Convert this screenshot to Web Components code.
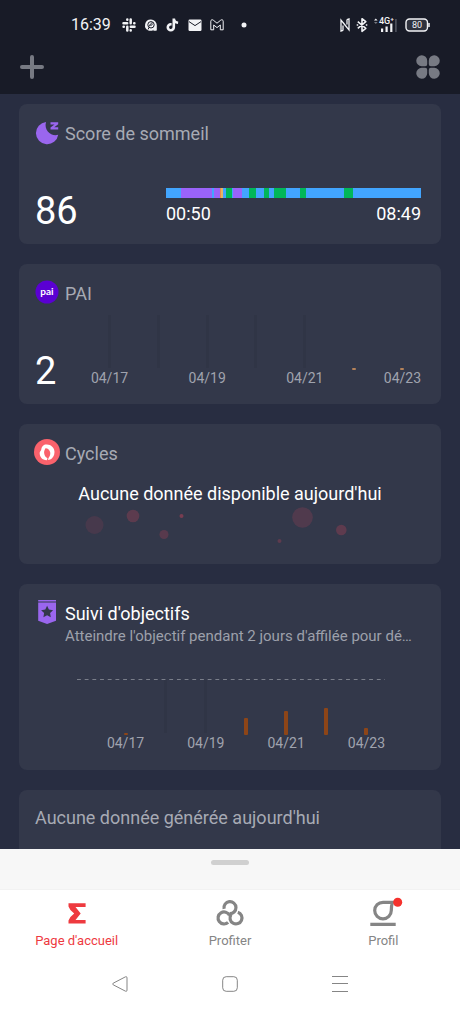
<!DOCTYPE html>
<html lang="fr">
<head>
<meta charset="utf-8">
<meta name="viewport" content="width=device-width, initial-scale=1">
<title>Page d'accueil</title>
<style>
  html, body { height: 100%; }
  body { margin: 0; font-family: Roboto, "Liberation Sans", sans-serif; background: #fff; }
</style>
</head>
<body>
<health-app></health-app>

<template id="status-bar">
  <style>
    :host { display: flex; justify-content: space-between; align-items: center; height: 50px; padding: 0 30px 0 71px; color: #f2f3f6; }
    div { display: flex; align-items: center; gap: 8px; }
    .right { gap: 7px; }
    time { font: 16px/20px Roboto, sans-serif; min-width: 43px; }
    svg { display: block; overflow: visible; }
    .dot { margin-left: 9px; }
    text { font-family: Roboto, sans-serif; fill: currentColor; }
  </style>
  <div>
    <time>16:39</time>
    <svg width="14" height="14" viewBox="0 0 14 14" fill="none" stroke="currentColor" stroke-width="2.500" stroke-linecap="round"><path d="M1.500 5.300h3.700M8.700 1.500v3.700M8.800 8.700h3.700M5.300 8.800v3.700M5.300 1.600v.2M12.200 5.300h.2M8.700 12.200v.2M1.600 8.700h.2"/></svg>
    <svg width="14" height="14" viewBox="0 0 14 14"><path d="M7 1.500a5.800 5.800 0 0 1 5.800 5.800V12a.8.8 0 0 1-.8.8H9.500l-.4-1.300-.6 1.300H5A5.800 5.800 0 0 1 7 1.500z" fill="currentColor"/><g fill="none" stroke="#181b27"><circle cx="7" cy="6.800" r="3.200"/><path d="M5.500 8.300c.3-2 1.500-3.200 3.300-3.500M6.500 7.500l2-1M4 11.500l1-2"/></g></svg>
    <svg width="14" height="14" viewBox="0 0 14 14" fill="none" stroke="currentColor" stroke-width="2.600"><path d="M7.800.5v8.700a3 3 0 1 1-3-3h.8M7.800.6c.3 2.600 2 4 4.300 4.200"/></svg>
    <svg width="14" height="14" viewBox="0 0 14 14"><rect x="0.500" y="1.500" width="13" height="11.500" rx="1.200" fill="currentColor"/><path d="M1 3.600l6 4 6-4" fill="none" stroke="#181b27"/></svg>
    <svg width="14" height="14" viewBox="0 0 14 14"><path d="M.8 11.800V3.200c0-1.400 1.500-1.900 2.500-1L7 5.200l3.700-3c1-.9 2.500-.4 2.500 1v8.600h-2.900V7L7 9.600 3.700 7v4.800z" fill="none" stroke="currentColor" stroke-linejoin="round"/></svg>
    <svg class="dot" width="6" height="6" viewBox="0 0 6 6"><circle cx="3" cy="3" r="2.500" fill="currentColor"/></svg>
  </div>
  <div class="right">
    <svg width="10" height="14" viewBox="0 0 10 14" fill="none" stroke="currentColor" stroke-width="1.300"><path d="M3 12.300L1 13V2l6 7.500M3 4.500L9 12V1L7 1.700M7 1.500v5M3 7.500v5"/></svg>
    <svg width="10" height="14" viewBox="0 0 10 14" fill="none" stroke="currentColor" stroke-width="1.600" stroke-linejoin="round"><path d="M.8 3.700l8 6.600L5 13.300V.7l3.800 3-8 6.600"/><path d="M-.3 7h1.500M8.800 7h1.500"/></svg>
    <svg width="24" height="14" viewBox="0 0 24 14"><text x="5" y="6" font-size="9" font-weight="500">4G⁺</text><path d="M0 2.500L1.800.5l1.800 2z" fill="currentColor"/><path d="M0 4l1.800 2 1.800-2z" fill="#777a83"/><path d="M7 10.500h2.200V14H7zM11.500 8.500h2.200V14h-2.200zM16.200 5.500h2.200V14h-2.200z" fill="currentColor"/><path d="M21 1h1.800v13H21z" fill="#4a4d58"/></svg>
    <svg width="25" height="14" viewBox="0 0 25 14"><rect x="1" y="1" width="21.500" height="12" rx="3.500" fill="#2f323d" stroke="currentColor" stroke-width="1.400"/><path d="M24 5v4" stroke="currentColor" stroke-width="1.500"/><text x="12" y="10" font-size="9" text-anchor="middle">80</text></svg>
  </div>
</template>

<template id="app-header">
  <style>
    :host { display: flex; justify-content: space-between; align-items: center; height: 44px; padding: 0 16px; box-sizing: border-box; }
    button { border: 0; padding: 4px; background: none; color: #777a83; height: 32px; margin-bottom: 10px; }
    svg { display: block; }
  </style>
  <button aria-label="Ajouter"><svg width="24" height="24" viewBox="0 0 24 24"><path d="M12 2v20M2 12h20" stroke="currentColor" stroke-width="4" stroke-linecap="round"/></svg></button>
  <button aria-label="Applications"><svg width="24" height="24" viewBox="0 0 24 24" fill="currentColor"><path d="M5.700.3A5.400 5.400 0 0 1 11.200 5.700V9.200a2 2 0 0 1-2 2H5.700A5.400 5.400 0 0 1 5.700.3z"/><path transform="translate(24 0) scale(-1 1)" d="M5.700.3A5.400 5.400 0 0 1 11.200 5.700V9.200a2 2 0 0 1-2 2H5.700A5.400 5.400 0 0 1 5.700.3z"/><path transform="translate(0 24) scale(1 -1)" d="M5.700.3A5.400 5.400 0 0 1 11.200 5.700V9.200a2 2 0 0 1-2 2H5.700A5.400 5.400 0 0 1 5.700.3z"/><path transform="translate(24 24) scale(-1 -1)" d="M5.700.3A5.400 5.400 0 0 1 11.200 5.700V9.200a2 2 0 0 1-2 2H5.700A5.400 5.400 0 0 1 5.700.3z"/></svg></button>
</template>

<template id="feed-card">
  <style>
    :host { display: flex; flex-direction: column; flex: none; box-sizing: border-box; min-height: 140px; padding: 18px 16px 13px; border-radius: 8px; background: #33384a; color: #fff; }
    header { display: flex; gap: 6px; }
    ::slotted(svg) { display: block; flex: none; overflow: visible; }
    h2 { margin: 0; font-weight: 400; font-size: 18px; line-height: 24px; color: var(--title, #a7aab4); white-space: nowrap; }
    .body { flex: 1; display: flex; flex-direction: column; justify-content: var(--body-align, flex-end); }
  </style>
  <header><slot name="icon"></slot><h2><slot name="title"></slot></h2></header>
  <div class="body"><slot></slot></div>
</template>

<template id="metric-row">
  <style>
    :host { display: grid; grid-template-columns: var(--value-width, 56px) 1fr; align-items: end; padding-right: 4px; }
    .value { font-size: 38px; line-height: 40px; }
    .chart { padding-bottom: 5px; }
  </style>
  <div class="value"><slot name="value"></slot></div>
  <div class="chart"><slot></slot></div>
</template>

<template id="sleep-timeline">
  <style>
    :host { display: block; }
    .bar { display: flex; height: 10px; margin-bottom: 4px; }
    .hours { display: flex; justify-content: space-between; font-size: 18px; line-height: 24px; }
  </style>
  <div class="bar"></div>
  <div class="hours"><slot name="start"></slot><slot name="end"></slot></div>
</template>

<template id="day-bars">
  <style>
    :host { display: flex; justify-content: space-between; }
    .day { width: 37px; display: flex; flex-direction: column; align-items: center; }
    .plot { height: 55px; display: flex; align-items: flex-end; }
    .fill { width: 4px; border-radius: 1px; background: var(--bar, #8d4518); }
    .empty { width: 3px; height: 53px; margin-bottom: 2px; background: #303546; }
    .label { height: 16px; line-height: 16px; font-size: 14px; color: #a0a3ae; }
  </style>
</template>

<template id="goal-chart">
  <style>
    :host { display: block; }
    p { margin: 0 0 33px 30px; font-size: 15px; line-height: 20px; color: #9da0ab; white-space: nowrap; }
    .target { height: 1px; margin: 0 40px 0 42px; background: linear-gradient(to right, #7a7e8a 55%, transparent 55%) 0 0 / calc(100% / 40) 1px; }
    .days { padding: 0 40px 0 72px; }
  </style>
  <p><slot name="hint"></slot></p>
  <div class="target"></div>
  <div class="days"><slot></slot></div>
</template>

<template id="empty-cycle">
  <style>
    :host { display: block; text-align: center; font-size: 18px; line-height: 24px; padding-top: 16px; }
    svg { display: block; margin: 0 auto; }
  </style>
  <slot></slot>
  <svg width="300" height="40" viewBox="80 506 300 40" fill="#e0455c" aria-hidden="true"><circle cx="94.500" cy="525" r="9" opacity=".12"/><circle cx="133" cy="516" r="6.300" opacity=".24"/><circle cx="164" cy="534.500" r="4.500" opacity=".22"/><circle cx="181.500" cy="516" r="2" opacity=".4"/><circle cx="302.500" cy="517.500" r="10.300" opacity=".17"/><circle cx="341.300" cy="530" r="5.300" opacity=".25"/><circle cx="279.500" cy="541" r="2" opacity=".25"/></svg>
</template>

<template id="pull-sheet">
  <style>
    :host { display: flex; justify-content: center; align-items: flex-start; flex: none; height: 40px; padding-top: 11px; box-sizing: border-box; background: #f7f7f7; }
    i { width: 38px; height: 5px; border-radius: 3px; background: #d0d0d0; }
  </style>
  <i></i>
</template>

<template id="tab-item">
  <style>
    :host { display: block; flex: 1; color: #858585; }
    :host([active]) { color: #ee3a3f; }
    a { display: flex; flex-direction: column; align-items: center; gap: 5px; color: inherit; text-decoration: none; font-size: 13px; line-height: 16px; }
    ::slotted(svg) { display: block; overflow: visible; }
  </style>
  <a href="#"><slot name="icon"></slot><span><slot></slot></span></a>
</template>

<template id="tab-bar">
  <style>
    :host { display: block; background: #fff; border-top: 1px solid #f2f2f2; }
    nav { display: flex; padding: 10px 0 7px; }
  </style>
  <nav><slot></slot></nav>
</template>

<template id="system-nav">
  <style>
    :host { display: flex; justify-content: center; align-items: center; gap: 78px; height: 56px; background: #fff; }
    button { border: 0; background: none; padding: 8px; width: 32px; height: 32px; color: #858585; }
    svg { display: block; }
  </style>
  <button aria-label="Retour"><svg width="16" height="16" viewBox="0 0 16 16" fill="none" stroke="currentColor" stroke-linejoin="round"><path d="M1.200 7.200L13.500.8q1.500-.5 1.500 1v12.400q0 1.500-1.500 1L1.200 8.800q-1.200-.8 0-1.600z"/></svg></button>
  <button aria-label="Accueil"><svg width="16" height="16" viewBox="0 0 16 16" fill="none" stroke="currentColor"><rect x=".7" y=".7" width="14.600" height="14.600" rx="3.500"/></svg></button>
  <button aria-label="Récents"><svg width="16" height="16" viewBox="0 0 16 16" fill="none" stroke="currentColor"><path d="M0 .5h16M0 7.500h16M0 15.500h16"/></svg></button>
</template>

<template id="health-app">
  <style>
    :host { display: flex; flex-direction: column; height: 100vh; overflow: hidden; }
    .top { background: #181b27; flex: none; }
    main { flex: 1; min-height: 0; overflow: hidden; display: flex; flex-direction: column; gap: 20px; padding: 10px 19px 0; background: #282d41; }
    .sleep { --value-width: 131px; }
    .pai { --bar: #b5825a; }
    .goals { --title: #fff; --body-align: flex-start; min-height: 186px; }
    .cycles { --body-align: flex-start; }
    .bottom { flex: none; }
  </style>
  <div class="top"><status-bar></status-bar><app-header></app-header></div>
  <main>
    <feed-card>
      <svg slot="icon" width="24" height="24" viewBox="0 0 24 24" fill="#9a66ee"><path d="M11 0A11.200 11.200 0 1 0 23.200 12.800C17 15 8.500 9 11 0z"/><path d="M15.500.2h7.700v2.100l-4 3h4v2.200h-7.700V5.400l4-3h-4z"/></svg>
      <span slot="title">Score de sommeil</span>
      <metric-row class="sleep"><span slot="value">86</span>
        <sleep-timeline stages="b45 p93 b5 p18 o4 y6 b8 g19 b4 p27 b21 g22 b22 g17 b14 g35 b44 g16 b115 g28 b204"><span slot="start">00:50</span><span slot="end">08:49</span></sleep-timeline>
      </metric-row>
    </feed-card>
    <feed-card>
      <svg slot="icon" width="24" height="24" viewBox="0 0 24 24"><circle cx="12" cy="10" r="11.500" fill="#5a00d2"/><text x="12" y="13" text-anchor="middle" font-family="Lato, sans-serif" font-weight="700" font-size="10" fill="#fff">pai</text></svg>
      <span slot="title">PAI</span>
      <metric-row class="pai"><span slot="value">2</span>
        <day-bars days="04/17:0 :0 04/19:0 :0 04/21:0 :2 04/23:2"></day-bars>
      </metric-row>
    </feed-card>
    <feed-card class="cycles">
      <svg slot="icon" width="24" height="24" viewBox="0 0 24 24"><circle cx="12" cy="10" r="13" fill="#fa626c"/><path d="M10 2.600C15 1.500 19.500 5 19.500 10c0 3.800-2 6.500-4.300 7.500L12.800 18l1-2.500c1.600-2 2.200-4.700.6-7C13.200 6.700 11.400 6 10.300 6.500c-.8 1.500-1.600 3-1 5.500.5 2.200 1.800 3.500 3.200 4.200l-.7 2C7.500 18.300 4.300 14.800 4.700 10.500 5.500 8.500 6.500 8 6.300 7c.4-2 1.700-3.800 3.700-4.400z" fill="#fff"/></svg>
      <span slot="title">Cycles</span>
      <empty-cycle>Aucune donnée disponible aujourd'hui</empty-cycle>
    </feed-card>
    <feed-card class="goals">
      <svg slot="icon" width="24" height="24" viewBox="0 0 24 24" fill="#9a66ee"><path d="M3.200-2h17.800v1.400H3.200zM3.200.5h17.800v18.300L12.100 22l-8.900-3.200z"/><path d="M12.100 3.800l1.800 3.800 4.200.6-3 2.900.7 4.200-3.700-2-3.700 2 .7-4.200-3-2.900 4.200-.6z" fill="#33384a"/></svg>
      <span slot="title">Suivi d'objectifs</span>
      <goal-chart><span slot="hint">Atteindre l'objectif pendant 2 jours d'affilée pour dé…</span>
        <day-bars days="04/17:2 :0 04/19:0 :17 04/21:24 :27 04/23:7"></day-bars>
      </goal-chart>
    </feed-card>
    <plain-card></plain-card>
  </main>
  <div class="bottom">
    <pull-sheet></pull-sheet>
    <tab-bar>
      <tab-item active><svg slot="icon" width="28" height="28" viewBox="0 0 28 28" fill="currentColor"><path d="M5.500 3.300H22.600V6.900H12.500l5.200 6.600-5.200 6.600h10.100v3.500H5.500V20.500q1-3.500 5.700-7Q6.500 10 5.500 6.500z"/></svg>Page d'accueil</tab-item>
      <tab-item><svg slot="icon" width="28" height="28" viewBox="0 0 28 28" fill="none" stroke="currentColor" stroke-width="3.200"><path d="M8.100 8.900A6 6 0 1 1 13.500 13.600"/><path d="M8.100 8.900A6 6 0 1 1 13.500 13.600" transform="rotate(120 14 14.500)"/><path d="M8.100 8.900A6 6 0 1 1 13.500 13.600" transform="rotate(240 14 14.500)"/></svg>Profiter</tab-item>
      <tab-item><svg slot="icon" width="28" height="28" viewBox="0 0 28 28"><path d="M23.500 2.300H14A8.300 8.300 0 1 0 22.300 10.600C22.300 7.500 22.500 5 23.500 2.300zM1.300 24.400h25.400" fill="none" stroke="currentColor" stroke-width="3.200"/><circle cx="28.700" cy="2.300" r="4.500" fill="#f5322d"/></svg>Profil</tab-item>
    </tab-bar>
    <system-nav></system-nav>
  </div>
</template>

<template id="plain-card">
  <style>
    :host { display: block; flex: none; box-sizing: border-box; min-height: 140px; padding: 16px; border-radius: 8px; background: #33384a; }
    p { margin: 0; font-size: 18px; line-height: 24px; color: #a7aab4; }
  </style>
  <p>Aucune donnée générée aujourd'hui</p>
</template>

<script>
  class BaseElement extends HTMLElement {
    constructor() {
      super();
      const tpl = document.getElementById(this.localName);
      this.attachShadow({ mode: 'open' }).append(tpl.content.cloneNode(true));
    }
  }

  const make = (className, text) => {
    const el = document.createElement('div');
    el.className = className;
    if (text) el.textContent = text;
    return el;
  };

  class SleepTimeline extends BaseElement {
    connectedCallback() {
      const colors = { b: '#42a5ff', p: '#9a63fa', g: '#02b75a', o: '#f08a4b', y: '#e3b567' };
      const bar = this.shadowRoot.querySelector('.bar');
      bar.replaceChildren(...this.getAttribute('stages').split(' ').map(stage => {
        const el = make('stage');
        el.style.flex = stage.slice(1) + ' 1 0';
        el.style.background = colors[stage[0]];
        return el;
      }));
    }
  }

  class DayBars extends BaseElement {
    connectedCallback() {
      this.shadowRoot.querySelectorAll('.day').forEach(d => d.remove());
      for (const entry of this.getAttribute('days').split(' ')) {
        const [label, height] = entry.split(':');
        const day = make('day'), plot = make('plot');
        const bar = make(+height ? 'fill' : 'empty');
        if (+height) bar.style.height = height + 'px';
        plot.append(bar);
        day.append(plot, make('label', label));
        this.shadowRoot.append(day);
      }
    }
  }

  customElements.define('sleep-timeline', SleepTimeline);
  customElements.define('day-bars', DayBars);
  for (const name of ['status-bar', 'app-header', 'feed-card', 'plain-card', 'metric-row', 'goal-chart',
                      'empty-cycle', 'pull-sheet', 'tab-item', 'tab-bar', 'system-nav', 'health-app']) {
    customElements.define(name, class extends BaseElement {});
  }
</script>
</body>
</html>
